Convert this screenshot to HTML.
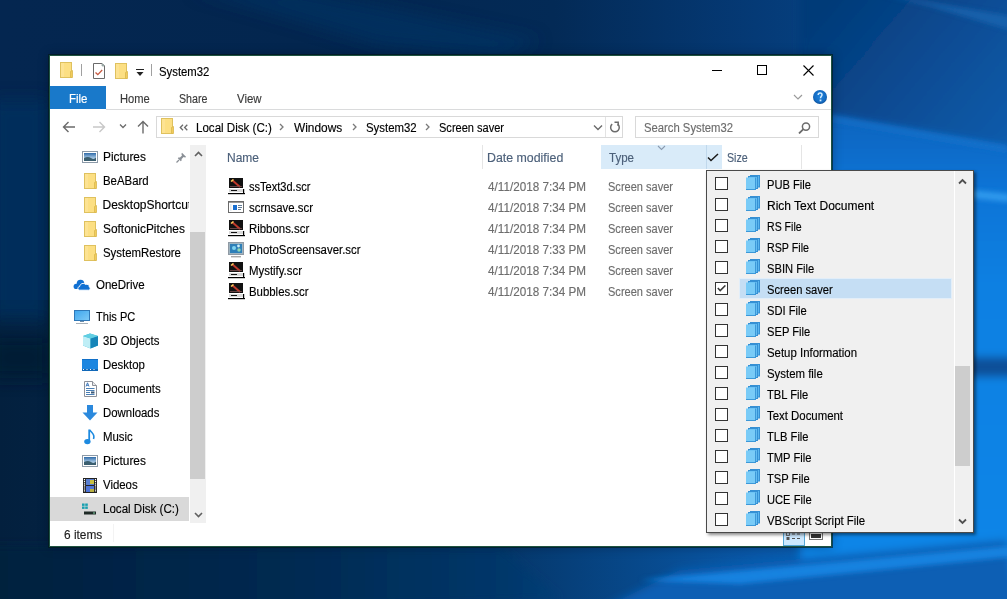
<!DOCTYPE html><html><head><meta charset="utf-8"><style>
html,body{margin:0;padding:0;width:1007px;height:599px;overflow:hidden;}
body{position:relative;background:#032a55;font-family:"Liberation Sans",sans-serif;}
.t{position:absolute;white-space:nowrap;line-height:14px;font-family:"Liberation Sans",sans-serif;-webkit-text-stroke:0.15px currentColor;}
.ic{position:absolute;display:block;}
.abs{position:absolute;}
</style></head><body>
<svg class="abs" style="left:0;top:0" width="1007" height="599" viewBox="0 0 1007 599">
<defs>
<linearGradient id="gtop" x1="0" y1="0" x2="1007" y2="0" gradientUnits="userSpaceOnUse">
<stop offset="0" stop-color="#042650"/><stop offset="0.3" stop-color="#03264f"/><stop offset="0.55" stop-color="#032a56"/><stop offset="0.75" stop-color="#053a76"/><stop offset="0.88" stop-color="#064688"/><stop offset="1" stop-color="#0a529c"/></linearGradient>
<linearGradient id="gbot" x1="0" y1="0" x2="1007" y2="0" gradientUnits="userSpaceOnUse">
<stop offset="0" stop-color="#03203e"/><stop offset="0.3" stop-color="#042a52"/><stop offset="0.5" stop-color="#05376a"/><stop offset="0.75" stop-color="#0958a8"/><stop offset="1" stop-color="#0a72d2"/></linearGradient>
<linearGradient id="gupr" x1="831" y1="0" x2="1007" y2="150" gradientUnits="userSpaceOnUse">
<stop offset="0" stop-color="#053a78"/><stop offset="0.5" stop-color="#084c94"/><stop offset="1" stop-color="#0a5cac"/></linearGradient>
<linearGradient id="gright" x1="0" y1="115" x2="0" y2="599" gradientUnits="userSpaceOnUse">
<stop offset="0" stop-color="#0a64be"/><stop offset="0.15" stop-color="#0a74d6"/><stop offset="0.35" stop-color="#0a80e2"/><stop offset="1" stop-color="#0a86e8"/></linearGradient>
<filter id="bl" x="-50%" y="-50%" width="200%" height="200%"><feGaussianBlur stdDeviation="4"/></filter>
<filter id="bl3" x="-50%" y="-50%" width="200%" height="200%"><feGaussianBlur stdDeviation="2.5"/></filter>
<filter id="bl2" x="-50%" y="-50%" width="200%" height="200%"><feGaussianBlur stdDeviation="8"/></filter>
</defs>
<rect width="1007" height="599" fill="#04223f"/>
<rect x="0" y="0" width="1007" height="300" fill="url(#gtop)"/>
<rect x="0" y="300" width="1007" height="299" fill="url(#gbot)"/>
<g filter="url(#bl)">
<polygon points="800,-20 1030,-20 1030,150 800,110" fill="url(#gupr)"/>
<polygon points="800,110 1030,150 1030,620 800,620" fill="url(#gright)"/>
<rect x="960" y="357" width="60" height="20" fill="#0a4f98"/>
<polygon points="600,610 680,570 1007,540 1020,620 600,620" fill="#0a5fb4"/>
<polygon points="-20,546 500,546 560,599 -20,620" fill="url(#gbot)"/>
</g>
<g filter="url(#bl3)">
<polygon points="880,-6 1010,16 1010,30 930,6" fill="#1a66b0" opacity="0.8"/>
<polygon points="831,116 1007,146 1007,152 831,121" fill="#1a78d0" opacity="0.7"/>
<polygon points="950,188 1010,194 1010,202 950,196" fill="#3aa2f2" opacity="0.8"/>
<polygon points="640,580 1007,546 1020,556 740,584" fill="#1886e4" opacity="0.9"/>
</g>
<g filter="url(#bl2)">
<rect x="-10" y="100" width="59" height="220" fill="#08315e" opacity="0.8"/>
<rect x="-10" y="338" width="59" height="40" fill="#021a34"/>
<polygon points="190,-10 300,-10 540,40 500,58 380,45" fill="#0a3668" opacity="0.55"/>
</g>
</svg>
<div class="abs" style="left:49px;top:55px;width:781px;height:490px;border:1px solid #1f5442;background:#fff;box-shadow:0 0 0 1px rgba(2,25,20,0.6),0 0 10px rgba(0,10,30,0.35)"></div>
<svg class="ic" style="left:60px;top:62px" width="13" height="16" viewBox="0 0 13 16"><rect x="0.5" y="0.5" width="11" height="15" fill="#fcdf83" stroke="#dfc15e"/><rect x="1" y="1" width="3" height="14" fill="#fde393"/><path d="M10.5 9.5 L12.5 8.5 L12.5 15.5 L10.5 15.5Z" fill="#f2cc5b" stroke="#d9b84f" stroke-width="0.8"/></svg><div class="abs" style="left:81px;top:64px;width:1px;height:12px;background:#a0a0a0"></div><svg class="ic" style="left:92px;top:62px" width="14" height="18" viewBox="0 0 14 18"><path d="M1.5 1.5 H10 L12.5 4 V16.5 H1.5Z" fill="#fff" stroke="#6a6a6a"/><path d="M10 1.5 V4 H12.5Z" fill="#b8c8c4" stroke="#7a8a86" stroke-width="0.6"/><path d="M3.5 10.5 L5.8 12.6 L10.2 8" fill="none" stroke="#c65a42" stroke-width="1.3"/></svg><svg class="ic" style="left:115px;top:63px" width="13" height="16" viewBox="0 0 13 16"><rect x="0.5" y="0.5" width="11" height="15" fill="#fcdf83" stroke="#dfc15e"/><rect x="1" y="1" width="3" height="14" fill="#fde393"/><path d="M10.5 9.5 L12.5 8.5 L12.5 15.5 L10.5 15.5Z" fill="#f2cc5b" stroke="#d9b84f" stroke-width="0.8"/></svg><div class="abs" style="left:136px;top:69px;width:8px;height:1px;background:#222"></div><svg class="ic" style="left:136px;top:72px" width="8" height="5" viewBox="0 0 8 5"><path d="M0.5 0 H7.5 L4 4Z" fill="#222"/></svg><div class="abs" style="left:151px;top:64px;width:1px;height:12px;background:#a0a0a0"></div><div class="t" style="left:159px;top:64.5px;color:#000;font-size:12px;transform:scaleX(0.944);transform-origin:0 0;">System32</div>
<div class="abs" style="left:712px;top:70px;width:10px;height:1px;background:#000"></div><div class="abs" style="left:757px;top:65px;width:8px;height:8px;border:1px solid #000"></div><svg class="ic" style="left:803px;top:65px" width="11" height="11" viewBox="0 0 11 11"><path d="M0.5 0.5 L10.5 10.5 M10.5 0.5 L0.5 10.5" stroke="#000" stroke-width="1.1"/></svg><div class="abs" style="left:50px;top:86px;width:56px;height:23px;background:#1979ca"></div><div class="t" style="left:69px;top:92px;color:#fff;font-size:12px;transform:scaleX(0.956);transform-origin:0 0;">File</div>
<div class="t" style="left:120px;top:92px;color:#3b3b3b;font-size:12px;transform:scaleX(0.93);transform-origin:0 0;">Home</div>
<div class="t" style="left:179px;top:92px;color:#3b3b3b;font-size:12px;transform:scaleX(0.89);transform-origin:0 0;">Share</div>
<div class="t" style="left:237px;top:92px;color:#3b3b3b;font-size:12px;transform:scaleX(0.95);transform-origin:0 0;">View</div>
<svg class="ic" style="left:793px;top:94px" width="10" height="7" viewBox="0 0 10 7"><path d="M1 1 L5 5 L9 1" fill="none" stroke="#9a9a9a" stroke-width="1.2"/></svg><svg class="ic" style="left:813px;top:90px" width="14" height="14" viewBox="0 0 14 14"><defs><radialGradient id="hg" cx="0.5" cy="0.45" r="0.55"><stop offset="0" stop-color="#2285dc"/><stop offset="0.75" stop-color="#146cc4"/><stop offset="1" stop-color="#0b4f98"/></radialGradient></defs><circle cx="7" cy="7" r="7" fill="url(#hg)"/><path d="M5.2 5.1 C5.2 3.6 6.1 3 7.1 3 C8.2 3 9 3.7 9 4.8 C9 6.1 7.5 6.3 7.5 8.2" fill="none" stroke="#d2ecff" stroke-width="1.5"/><rect x="6.6" y="9.5" width="1.8" height="1.8" fill="#d2ecff"/></svg><div class="abs" style="left:106px;top:109px;width:725px;height:1px;background:#dadbdc"></div><svg class="ic" style="left:62px;top:121px" width="14" height="12" viewBox="0 0 14 12"><path d="M13 6 H1.5 M6.5 1 L1.5 6 L6.5 11" fill="none" stroke="#6b6b6b" stroke-width="1.4"/></svg><svg class="ic" style="left:92px;top:121px" width="14" height="12" viewBox="0 0 14 12"><path d="M1 6 H12.5 M7.5 1 L12.5 6 L7.5 11" fill="none" stroke="#c8c8c8" stroke-width="1.4"/></svg><svg class="ic" style="left:119px;top:123px" width="8" height="6" viewBox="0 0 8 6"><path d="M1 1.5 L4 4.5 L7 1.5" fill="none" stroke="#6b6b6b" stroke-width="1.3"/></svg><svg class="ic" style="left:137px;top:120px" width="12" height="14" viewBox="0 0 12 14"><path d="M6 13.5 V1.5 M1 6.5 L6 1.5 L11 6.5" fill="none" stroke="#6b6b6b" stroke-width="1.4"/></svg><div class="abs" style="left:156px;top:116px;width:465px;height:20px;border:1px solid #d9d9d9;background:#fff"></div><svg class="ic" style="left:161px;top:118px" width="13" height="16" viewBox="0 0 13 16"><rect x="0.5" y="0.5" width="11" height="15" fill="#fcdf83" stroke="#dfc15e"/><rect x="1" y="1" width="3" height="14" fill="#fde393"/><path d="M10.5 9.5 L12.5 8.5 L12.5 15.5 L10.5 15.5Z" fill="#f2cc5b" stroke="#d9b84f" stroke-width="0.8"/></svg><svg class="ic" style="left:179px;top:124px" width="10" height="7" viewBox="0 0 10 7"><path d="M4 0.8 L1.3 3.5 L4 6.2 M8.3 0.8 L5.6 3.5 L8.3 6.2" fill="none" stroke="#6b6b6b" stroke-width="1.3"/></svg><div class="t" style="left:196px;top:121px;color:#000;font-size:12px;transform:scaleX(0.964);transform-origin:0 0;">Local Disk (C:)</div>
<svg class="ic" style="left:279px;top:123px" width="6" height="8" viewBox="0 0 6 8"><path d="M1 1 L4 4 L1 7" fill="none" stroke="#7a7a7a" stroke-width="1.3"/></svg><div class="t" style="left:294px;top:121px;color:#000;font-size:12px;transform:scaleX(0.99);transform-origin:0 0;">Windows</div>
<svg class="ic" style="left:352px;top:123px" width="6" height="8" viewBox="0 0 6 8"><path d="M1 1 L4 4 L1 7" fill="none" stroke="#7a7a7a" stroke-width="1.3"/></svg><div class="t" style="left:366px;top:121px;color:#000;font-size:12px;transform:scaleX(0.95);transform-origin:0 0;">System32</div>
<svg class="ic" style="left:425px;top:123px" width="6" height="8" viewBox="0 0 6 8"><path d="M1 1 L4 4 L1 7" fill="none" stroke="#7a7a7a" stroke-width="1.3"/></svg><div class="t" style="left:439px;top:121px;color:#000;font-size:12px;transform:scaleX(0.92);transform-origin:0 0;">Screen saver</div>
<svg class="ic" style="left:593px;top:124px" width="10" height="8" viewBox="0 0 10 8"><path d="M1 1.5 L5 5.5 L9 1.5" fill="none" stroke="#6b6b6b" stroke-width="1.4"/></svg><div class="abs" style="left:605px;top:117px;width:1px;height:20px;background:#e3e3e3"></div><svg class="ic" style="left:609px;top:121px" width="12" height="13" viewBox="0 0 12 13"><path d="M8.7 3.2 A4.3 4.3 0 1 1 3.2 3.2" fill="none" stroke="#6b6b6b" stroke-width="1.5"/><path d="M5.5 1.2 H9.2 V5" fill="none" stroke="#6b6b6b" stroke-width="1.5"/></svg><div class="abs" style="left:635px;top:116px;width:182px;height:20px;border:1px solid #d9d9d9;background:#fff"></div><div class="t" style="left:644px;top:121px;color:#6d6d6d;font-size:12px;transform:scaleX(0.94);transform-origin:0 0;">Search System32</div>
<svg class="ic" style="left:798px;top:122px" width="13" height="12" viewBox="0 0 13 12"><circle cx="8" cy="4.6" r="3.6" fill="none" stroke="#6b6b6b" stroke-width="1.5"/><path d="M5.4 7.2 L1 11.5" stroke="#6b6b6b" stroke-width="1.8"/></svg><div class="abs" style="left:50px;top:497px;width:139px;height:24px;background:#d9d9d9"></div><svg class="ic" style="left:82px;top:151px" width="16" height="12" viewBox="0 0 16 12"><defs><linearGradient id="pg0" x1="0" y1="0" x2="0" y2="1"><stop offset="0" stop-color="#2e6aa8"/><stop offset="0.5" stop-color="#8fb6d9"/><stop offset="1" stop-color="#cfe3f0"/></linearGradient></defs><rect x="0.5" y="0.5" width="15" height="11" fill="#fff" stroke="#8c9aa8"/><rect x="2" y="2" width="12" height="8" fill="url(#pg0)"/><path d="M2 7 Q6 5 9 7 T14 6.5 V10 H2Z" fill="#3b5f70"/></svg><svg class="ic" style="left:84px;top:173px" width="13" height="16" viewBox="0 0 13 16"><rect x="0.5" y="0.5" width="11" height="15" fill="#fcdf83" stroke="#dfc15e"/><rect x="1" y="1" width="3" height="14" fill="#fde393"/><path d="M10.5 9.5 L12.5 8.5 L12.5 15.5 L10.5 15.5Z" fill="#f2cc5b" stroke="#d9b84f" stroke-width="0.8"/></svg><svg class="ic" style="left:84px;top:197px" width="13" height="16" viewBox="0 0 13 16"><rect x="0.5" y="0.5" width="11" height="15" fill="#fcdf83" stroke="#dfc15e"/><rect x="1" y="1" width="3" height="14" fill="#fde393"/><path d="M10.5 9.5 L12.5 8.5 L12.5 15.5 L10.5 15.5Z" fill="#f2cc5b" stroke="#d9b84f" stroke-width="0.8"/></svg><svg class="ic" style="left:84px;top:221px" width="13" height="16" viewBox="0 0 13 16"><rect x="0.5" y="0.5" width="11" height="15" fill="#fcdf83" stroke="#dfc15e"/><rect x="1" y="1" width="3" height="14" fill="#fde393"/><path d="M10.5 9.5 L12.5 8.5 L12.5 15.5 L10.5 15.5Z" fill="#f2cc5b" stroke="#d9b84f" stroke-width="0.8"/></svg><svg class="ic" style="left:84px;top:245px" width="13" height="16" viewBox="0 0 13 16"><rect x="0.5" y="0.5" width="11" height="15" fill="#fcdf83" stroke="#dfc15e"/><rect x="1" y="1" width="3" height="14" fill="#fde393"/><path d="M10.5 9.5 L12.5 8.5 L12.5 15.5 L10.5 15.5Z" fill="#f2cc5b" stroke="#d9b84f" stroke-width="0.8"/></svg><svg class="ic" style="left:73px;top:279px" width="18" height="12" viewBox="0 0 18 12"><g fill="#1170d2"><circle cx="7.5" cy="4.6" r="3.8"/><circle cx="3.2" cy="7.4" r="2.6"/><rect x="3" y="6" width="6" height="4"/></g><path d="M6.6 11.2 C4.4 11.2 4.2 7.8 6.6 7.6 C7 4.6 10.6 3.4 12.6 5.4 C14.3 4.6 16.6 5.8 16.3 8 C17.6 8.4 17.6 11.2 15.8 11.2Z" fill="#1170d2" stroke="#fff" stroke-width="1"/></svg><svg class="ic" style="left:73px;top:310px" width="18" height="15" viewBox="0 0 18 15"><defs><linearGradient id="pcg" x1="0" y1="0" x2="1" y2="1"><stop offset="0" stop-color="#3ea6ee"/><stop offset="1" stop-color="#7fcaf7"/></linearGradient></defs><rect x="1.5" y="0.5" width="15" height="10" fill="url(#pcg)" stroke="#2f78b8"/><rect x="7" y="11" width="4" height="1" fill="#6c8ca8"/><rect x="3" y="13" width="12" height="1" fill="#a9b2ba"/></svg><svg class="ic" style="left:82px;top:333px" width="17" height="16" viewBox="0 0 17 16"><path d="M1 3 L8 0.5 L16 3 L16 12.5 L8.5 15.5 L1 12.5Z" fill="#35b8d4"/><path d="M1 3 L8.5 5.5 L8.5 15.5 L1 12.5Z" fill="#bfeef6"/><path d="M8.5 5.5 L16 3 L16 12.5 L8.5 15.5Z" fill="#1685b8"/><path d="M1 3 L8 0.5 L16 3 L8.5 5.5Z" fill="#62cfe3"/></svg><svg class="ic" style="left:82px;top:359px" width="16" height="12" viewBox="0 0 16 12"><rect x="0" y="0" width="16" height="12" fill="#1e87e0"/><rect x="0" y="0" width="16" height="1" fill="#1170c8"/><rect x="0" y="10" width="16" height="2" fill="#1168b8"/><path d="M1 10.5 H15" stroke="#fff" stroke-width="1" stroke-dasharray="1 2.5"/></svg><svg class="ic" style="left:84px;top:381px" width="13" height="16" viewBox="0 0 13 16"><path d="M0.5 0.5 H8.5 L12.5 4.5 V15.5 H0.5Z" fill="#fff" stroke="#8c9099"/><path d="M8.5 0.5 V4.5 H12.5" fill="#e8e8e8" stroke="#8c9099"/><path d="M2 5.5 L3.5 1.8 L5 5.5 M2.5 4.3 H4.5" fill="none" stroke="#2f6db5" stroke-width="0.9"/><path d="M2 7.5 H10.5 M2 9.5 H10.5 M2 11.5 H6 M2 13.5 H10.5" fill="none" stroke="#4a7fb5" stroke-width="1"/><rect x="7" y="10.5" width="3.5" height="2" fill="#3c5a78"/></svg><svg class="ic" style="left:82px;top:405px" width="16" height="16" viewBox="0 0 16 16"><path d="M5 0 H11 V7.5 H15.5 L8 15.5 L0.5 7.5 H5Z" fill="#2b89dd"/></svg><svg class="ic" style="left:84px;top:429px" width="12" height="16" viewBox="0 0 12 16"><path d="M5.2 0.5 V11.5" stroke="#1d8ae0" stroke-width="1.8"/><ellipse cx="3.4" cy="12.6" rx="3.2" ry="2.6" fill="#1d8ae0"/><path d="M5.6 0.8 C7 3.5 11.5 5 9.5 10" fill="none" stroke="#1d8ae0" stroke-width="1.6"/></svg><svg class="ic" style="left:82px;top:455px" width="16" height="12" viewBox="0 0 16 12"><defs><linearGradient id="pg12" x1="0" y1="0" x2="0" y2="1"><stop offset="0" stop-color="#2e6aa8"/><stop offset="0.5" stop-color="#8fb6d9"/><stop offset="1" stop-color="#cfe3f0"/></linearGradient></defs><rect x="0.5" y="0.5" width="15" height="11" fill="#fff" stroke="#8c9aa8"/><rect x="2" y="2" width="12" height="8" fill="url(#pg12)"/><path d="M2 7 Q6 5 9 7 T14 6.5 V10 H2Z" fill="#3b5f70"/></svg><svg class="ic" style="left:83px;top:478px" width="14" height="15" viewBox="0 0 14 15"><rect x="0" y="0" width="14" height="15" fill="#222"/><rect x="3" y="1" width="8" height="6" fill="#5a7fd0"/><rect x="7" y="2" width="4" height="4" fill="#c8c040"/><rect x="3" y="8" width="8" height="6" fill="#4f74d6"/><rect x="7" y="11" width="4" height="3" fill="#b8b040"/><path d="M1.5 1 V14 M12.5 1 V14" stroke="#fff" stroke-width="1.2" stroke-dasharray="1.2 0.9"/></svg><svg class="ic" style="left:81px;top:503px" width="16" height="13" viewBox="0 0 16 13"><rect x="1" y="0.5" width="2.6" height="2.4" fill="#1aa0b0"/><rect x="4.2" y="0.5" width="2.6" height="2.4" fill="#1aa0b0"/><rect x="1" y="3.5" width="2.6" height="2.4" fill="#1aa0b0"/><rect x="4.2" y="3.5" width="2.6" height="2.4" fill="#1aa0b0"/><rect x="3" y="8.5" width="12" height="3" fill="#1f2a26"/><rect x="12" y="9.5" width="2" height="1" fill="#7fcf9f"/></svg><div class="abs" style="left:50px;top:144px;width:139px;height:378px;overflow:hidden"><div class="t" style="left:52.5px;top:6px;color:#000;font-size:12px;transform:scaleX(0.99);transform-origin:0 0;">Pictures</div>
<div class="t" style="left:52.5px;top:30px;color:#000;font-size:12px;transform:scaleX(0.95);transform-origin:0 0;">BeABard</div>
<div class="t" style="left:52.5px;top:54px;color:#000;font-size:12px;">DesktopShortcuts</div>
<div class="t" style="left:52.5px;top:78px;color:#000;font-size:12px;transform:scaleX(0.99);transform-origin:0 0;">SoftonicPitches</div>
<div class="t" style="left:52.5px;top:102px;color:#000;font-size:12px;transform:scaleX(0.95);transform-origin:0 0;">SystemRestore</div>
<div class="t" style="left:46px;top:134px;color:#000;font-size:12px;transform:scaleX(0.96);transform-origin:0 0;">OneDrive</div>
<div class="t" style="left:46px;top:166px;color:#000;font-size:12px;transform:scaleX(0.92);transform-origin:0 0;">This PC</div>
<div class="t" style="left:52.5px;top:190px;color:#000;font-size:12px;transform:scaleX(0.95);transform-origin:0 0;">3D Objects</div>
<div class="t" style="left:52.5px;top:214px;color:#000;font-size:12px;transform:scaleX(0.95);transform-origin:0 0;">Desktop</div>
<div class="t" style="left:52.5px;top:238px;color:#000;font-size:12px;transform:scaleX(0.95);transform-origin:0 0;">Documents</div>
<div class="t" style="left:52.5px;top:262px;color:#000;font-size:12px;transform:scaleX(0.95);transform-origin:0 0;">Downloads</div>
<div class="t" style="left:52.5px;top:286px;color:#000;font-size:12px;transform:scaleX(0.95);transform-origin:0 0;">Music</div>
<div class="t" style="left:52.5px;top:310px;color:#000;font-size:12px;transform:scaleX(0.99);transform-origin:0 0;">Pictures</div>
<div class="t" style="left:52.5px;top:334px;color:#000;font-size:12px;transform:scaleX(0.95);transform-origin:0 0;">Videos</div>
<div class="t" style="left:52.5px;top:358px;color:#000;font-size:12px;transform:scaleX(0.964);transform-origin:0 0;">Local Disk (C:)</div>
</div><svg class="ic" style="left:176px;top:152px" width="11" height="11" viewBox="0 0 11 11"><path d="M6 0.8 L10.2 5 L9 5.6 L7.6 5 L5.6 7 L5.6 8.6 L4.8 9.2 L1.8 6.2 L2.4 5.4 L4 5.4 L6 3.4 L5.4 2 Z" fill="#8a8f96"/><path d="M3 8 L0.5 10.5" stroke="#8a8f96" stroke-width="1.3"/></svg><div class="abs" style="left:190px;top:145px;width:16px;height:378px;background:#f0f0f0"></div><div class="abs" style="left:190px;top:232px;width:15px;height:247px;background:#cdcdcd"></div><svg class="ic" style="left:194px;top:151px" width="9" height="6" viewBox="0 0 9 6"><path d="M1 5 L4.5 1.5 L8 5" fill="none" stroke="#606060" stroke-width="1.6"/></svg><svg class="ic" style="left:194px;top:512px" width="9" height="6" viewBox="0 0 9 6"><path d="M1 1 L4.5 4.5 L8 1" fill="none" stroke="#606060" stroke-width="1.6"/></svg><div class="t" style="left:227px;top:151px;color:#4c607a;font-size:12px;">Name</div>
<div class="abs" style="left:482px;top:145px;width:1px;height:24px;background:#e5e5e5"></div><div class="t" style="left:487px;top:151px;color:#4c607a;font-size:12px;transform:scaleX(1.03);transform-origin:0 0;">Date modified</div>
<div class="abs" style="left:601px;top:145px;width:121px;height:24px;background:#d9ebf9"></div><div class="abs" style="left:706px;top:145px;width:1px;height:24px;background:#c0d8ec"></div><div class="t" style="left:609px;top:151px;color:#4c607a;font-size:12px;transform:scaleX(0.96);transform-origin:0 0;">Type</div>
<svg class="ic" style="left:657px;top:145px" width="9" height="6" viewBox="0 0 9 6"><path d="M1 1 L4.5 4.5 L8 1" fill="none" stroke="#8a9bb0" stroke-width="1.1"/></svg><svg class="ic" style="left:707px;top:153px" width="12" height="9" viewBox="0 0 12 9"><path d="M1 4.5 L4 7.5 L11 1" fill="none" stroke="#1a1a1a" stroke-width="1.5"/></svg><div class="t" style="left:727px;top:151px;color:#4c607a;font-size:12px;transform:scaleX(0.89);transform-origin:0 0;">Size</div>
<div class="abs" style="left:801px;top:145px;width:1px;height:24px;background:#e5e5e5"></div><svg class="ic" style="left:228px;top:178px" width="17" height="17" viewBox="0 0 17 17"><rect x="1" y="0" width="14" height="10" fill="#111"/><path d="M4 2 L12 9" stroke="#c0392b" stroke-width="2"/><path d="M3 3.5 L5.5 1.5" stroke="#f6d060" stroke-width="1.6"/><rect x="2" y="8" width="12" height="0.8" fill="#7a5050"/><rect x="1" y="11" width="15" height="3" fill="#d9d9d9"/><rect x="0" y="15" width="17" height="1.2" fill="#000"/><rect x="15" y="11" width="1.2" height="5" fill="#000"/><rect x="3" y="12" width="6" height="1" fill="#111"/></svg><div class="t" style="left:249px;top:180px;color:#000;font-size:12px;transform:scaleX(0.92);transform-origin:0 0;">ssText3d.scr</div>
<div class="t" style="left:488px;top:180px;color:#6d6d6d;font-size:12px;transform:scaleX(0.975);transform-origin:0 0;">4/11/2018 7:34 PM</div>
<div class="t" style="left:608px;top:180px;color:#6d6d6d;font-size:12px;transform:scaleX(0.92);transform-origin:0 0;">Screen saver</div>
<svg class="ic" style="left:228px;top:200px" width="17" height="17" viewBox="0 0 17 17"><rect x="0.5" y="1.5" width="15" height="11" fill="#fff" stroke="#6a6a6a"/><rect x="1" y="2" width="14" height="1" fill="#9a9a9a"/><rect x="2" y="4" width="1.5" height="7" fill="#e4ecf2"/><rect x="5" y="5" width="4" height="5" fill="#1a6fd0"/><path d="M10 5.5 H14 M10 7.5 H14 M10 9.5 H13" fill="none" stroke="#3a5a7a" stroke-width="0.8"/></svg><div class="t" style="left:249px;top:201px;color:#000;font-size:12px;transform:scaleX(0.95);transform-origin:0 0;">scrnsave.scr</div>
<div class="t" style="left:488px;top:201px;color:#6d6d6d;font-size:12px;transform:scaleX(0.975);transform-origin:0 0;">4/11/2018 7:34 PM</div>
<div class="t" style="left:608px;top:201px;color:#6d6d6d;font-size:12px;transform:scaleX(0.92);transform-origin:0 0;">Screen saver</div>
<svg class="ic" style="left:228px;top:220px" width="17" height="17" viewBox="0 0 17 17"><rect x="1" y="0" width="14" height="10" fill="#111"/><path d="M4 2 L12 9" stroke="#c0392b" stroke-width="2"/><path d="M3 3.5 L5.5 1.5" stroke="#f6d060" stroke-width="1.6"/><rect x="2" y="8" width="12" height="0.8" fill="#7a5050"/><rect x="1" y="11" width="15" height="3" fill="#d9d9d9"/><rect x="0" y="15" width="17" height="1.2" fill="#000"/><rect x="15" y="11" width="1.2" height="5" fill="#000"/><rect x="3" y="12" width="6" height="1" fill="#111"/></svg><div class="t" style="left:249px;top:222px;color:#000;font-size:12px;transform:scaleX(0.95);transform-origin:0 0;">Ribbons.scr</div>
<div class="t" style="left:488px;top:222px;color:#6d6d6d;font-size:12px;transform:scaleX(0.975);transform-origin:0 0;">4/11/2018 7:34 PM</div>
<div class="t" style="left:608px;top:222px;color:#6d6d6d;font-size:12px;transform:scaleX(0.92);transform-origin:0 0;">Screen saver</div>
<svg class="ic" style="left:228px;top:242px" width="17" height="17" viewBox="0 0 17 17"><rect x="0.5" y="0.5" width="15" height="12" fill="#a0b4c0" stroke="#909aa4"/><rect x="2" y="2" width="12" height="9" fill="#2e7fb8"/><circle cx="6" cy="6" r="2" fill="#7fd4f0"/><circle cx="10.5" cy="4" r="1.4" fill="#cfeff8"/><circle cx="11" cy="8" r="1.7" fill="#8fd8b0"/><rect x="3" y="14" width="10" height="1.4" fill="#a8a8a8"/></svg><div class="t" style="left:249px;top:243px;color:#000;font-size:12px;transform:scaleX(0.95);transform-origin:0 0;">PhotoScreensaver.scr</div>
<div class="t" style="left:488px;top:243px;color:#6d6d6d;font-size:12px;transform:scaleX(0.975);transform-origin:0 0;">4/11/2018 7:33 PM</div>
<div class="t" style="left:608px;top:243px;color:#6d6d6d;font-size:12px;transform:scaleX(0.92);transform-origin:0 0;">Screen saver</div>
<svg class="ic" style="left:228px;top:262px" width="17" height="17" viewBox="0 0 17 17"><rect x="1" y="0" width="14" height="10" fill="#111"/><path d="M4 2 L12 9" stroke="#c0392b" stroke-width="2"/><path d="M3 3.5 L5.5 1.5" stroke="#f6d060" stroke-width="1.6"/><rect x="2" y="8" width="12" height="0.8" fill="#7a5050"/><rect x="1" y="11" width="15" height="3" fill="#d9d9d9"/><rect x="0" y="15" width="17" height="1.2" fill="#000"/><rect x="15" y="11" width="1.2" height="5" fill="#000"/><rect x="3" y="12" width="6" height="1" fill="#111"/></svg><div class="t" style="left:249px;top:264px;color:#000;font-size:12px;transform:scaleX(0.95);transform-origin:0 0;">Mystify.scr</div>
<div class="t" style="left:488px;top:264px;color:#6d6d6d;font-size:12px;transform:scaleX(0.975);transform-origin:0 0;">4/11/2018 7:34 PM</div>
<div class="t" style="left:608px;top:264px;color:#6d6d6d;font-size:12px;transform:scaleX(0.92);transform-origin:0 0;">Screen saver</div>
<svg class="ic" style="left:228px;top:283px" width="17" height="17" viewBox="0 0 17 17"><rect x="1" y="0" width="14" height="10" fill="#111"/><path d="M4 2 L12 9" stroke="#c0392b" stroke-width="2"/><path d="M3 3.5 L5.5 1.5" stroke="#f6d060" stroke-width="1.6"/><rect x="2" y="8" width="12" height="0.8" fill="#7a5050"/><rect x="1" y="11" width="15" height="3" fill="#d9d9d9"/><rect x="0" y="15" width="17" height="1.2" fill="#000"/><rect x="15" y="11" width="1.2" height="5" fill="#000"/><rect x="3" y="12" width="6" height="1" fill="#111"/></svg><div class="t" style="left:249px;top:285px;color:#000;font-size:12px;transform:scaleX(0.95);transform-origin:0 0;">Bubbles.scr</div>
<div class="t" style="left:488px;top:285px;color:#6d6d6d;font-size:12px;transform:scaleX(0.975);transform-origin:0 0;">4/11/2018 7:34 PM</div>
<div class="t" style="left:608px;top:285px;color:#6d6d6d;font-size:12px;transform:scaleX(0.92);transform-origin:0 0;">Screen saver</div>
<div class="t" style="left:64px;top:528px;color:#1e1e1e;font-size:12px;transform:scaleX(0.99);transform-origin:0 0;">6 items</div>
<div class="abs" style="left:113px;top:524px;width:1px;height:18px;background:#f3f3f3"></div><div class="abs" style="left:783px;top:522px;width:20px;height:22px;border:1px solid #56a8d8;background:#cce8ff"></div><svg class="ic" style="left:786px;top:532px" width="16" height="9" viewBox="0 0 16 9"><rect x="0.5" y="0.5" width="3" height="3" fill="none" stroke="#555" stroke-width="0.8"/><rect x="0.5" y="5" width="3" height="3" fill="#555"/><path d="M6 2 H9 M11 2 H14 M6 6.5 H9 M11 6.5 H14" stroke="#555" stroke-width="1"/></svg><svg class="ic" style="left:809px;top:532px" width="14" height="8" viewBox="0 0 14 8"><rect x="0.5" y="0.5" width="13" height="7" fill="#fff" stroke="#777"/><rect x="2" y="2" width="10" height="4" fill="#333"/></svg><div class="abs" style="left:706px;top:170px;width:266px;height:361px;border:1px solid #4a4a4a;background:#f0f0f0;box-shadow:2px 2px 3px rgba(0,0,0,0.45)"></div><div class="abs" style="left:954px;top:171px;width:1px;height:360px;background:#ffffff"></div><div class="abs" style="left:955px;top:366px;width:15px;height:100px;background:#cdcdcd"></div><svg class="ic" style="left:958px;top:178px" width="9" height="7" viewBox="0 0 9 7"><path d="M1 5.5 L4.5 2 L8 5.5" fill="none" stroke="#505050" stroke-width="1.8"/></svg><svg class="ic" style="left:958px;top:518px" width="9" height="7" viewBox="0 0 9 7"><path d="M1 1.5 L4.5 5 L8 1.5" fill="none" stroke="#505050" stroke-width="1.8"/></svg><div class="abs" style="left:715px;top:177px;width:11px;height:11px;border:1px solid #333;background:#fff"></div><svg class="ic" style="left:745px;top:175px" width="16" height="16" viewBox="0 0 16 16"><rect x="5.5" y="0.5" width="9" height="11.5" fill="#5ab6ee" stroke="#3590d4" stroke-width="1"/><rect x="3.5" y="1.5" width="9" height="12" fill="#62bdf2" stroke="#3590d4" stroke-width="1"/><rect x="1" y="2.5" width="10" height="12.5" fill="#79cbf7"/><rect x="1" y="14" width="10" height="1" fill="#3c98d8"/><rect x="10" y="2.5" width="1" height="12.5" fill="#3c98d8"/></svg><div class="t" style="left:767px;top:177.5px;color:#000;font-size:12px;transform:scaleX(0.93);transform-origin:0 0;">PUB File</div>
<div class="abs" style="left:715px;top:198px;width:11px;height:11px;border:1px solid #333;background:#fff"></div><svg class="ic" style="left:745px;top:196px" width="16" height="16" viewBox="0 0 16 16"><rect x="5.5" y="0.5" width="9" height="11.5" fill="#5ab6ee" stroke="#3590d4" stroke-width="1"/><rect x="3.5" y="1.5" width="9" height="12" fill="#62bdf2" stroke="#3590d4" stroke-width="1"/><rect x="1" y="2.5" width="10" height="12.5" fill="#79cbf7"/><rect x="1" y="14" width="10" height="1" fill="#3c98d8"/><rect x="10" y="2.5" width="1" height="12.5" fill="#3c98d8"/></svg><div class="t" style="left:767px;top:198.5px;color:#000;font-size:12px;">Rich Text Document</div>
<div class="abs" style="left:715px;top:219px;width:11px;height:11px;border:1px solid #333;background:#fff"></div><svg class="ic" style="left:745px;top:217px" width="16" height="16" viewBox="0 0 16 16"><rect x="5.5" y="0.5" width="9" height="11.5" fill="#5ab6ee" stroke="#3590d4" stroke-width="1"/><rect x="3.5" y="1.5" width="9" height="12" fill="#62bdf2" stroke="#3590d4" stroke-width="1"/><rect x="1" y="2.5" width="10" height="12.5" fill="#79cbf7"/><rect x="1" y="14" width="10" height="1" fill="#3c98d8"/><rect x="10" y="2.5" width="1" height="12.5" fill="#3c98d8"/></svg><div class="t" style="left:767px;top:219.5px;color:#000;font-size:12px;transform:scaleX(0.88);transform-origin:0 0;">RS File</div>
<div class="abs" style="left:715px;top:240px;width:11px;height:11px;border:1px solid #333;background:#fff"></div><svg class="ic" style="left:745px;top:238px" width="16" height="16" viewBox="0 0 16 16"><rect x="5.5" y="0.5" width="9" height="11.5" fill="#5ab6ee" stroke="#3590d4" stroke-width="1"/><rect x="3.5" y="1.5" width="9" height="12" fill="#62bdf2" stroke="#3590d4" stroke-width="1"/><rect x="1" y="2.5" width="10" height="12.5" fill="#79cbf7"/><rect x="1" y="14" width="10" height="1" fill="#3c98d8"/><rect x="10" y="2.5" width="1" height="12.5" fill="#3c98d8"/></svg><div class="t" style="left:767px;top:240.5px;color:#000;font-size:12px;transform:scaleX(0.89);transform-origin:0 0;">RSP File</div>
<div class="abs" style="left:715px;top:261px;width:11px;height:11px;border:1px solid #333;background:#fff"></div><svg class="ic" style="left:745px;top:259px" width="16" height="16" viewBox="0 0 16 16"><rect x="5.5" y="0.5" width="9" height="11.5" fill="#5ab6ee" stroke="#3590d4" stroke-width="1"/><rect x="3.5" y="1.5" width="9" height="12" fill="#62bdf2" stroke="#3590d4" stroke-width="1"/><rect x="1" y="2.5" width="10" height="12.5" fill="#79cbf7"/><rect x="1" y="14" width="10" height="1" fill="#3c98d8"/><rect x="10" y="2.5" width="1" height="12.5" fill="#3c98d8"/></svg><div class="t" style="left:767px;top:261.5px;color:#000;font-size:12px;transform:scaleX(0.93);transform-origin:0 0;">SBIN File</div>
<div class="abs" style="left:739px;top:278px;width:211px;height:19px;border:1px solid #e2eef9;background:#c5def4"></div><div class="abs" style="left:715px;top:282px;width:11px;height:11px;border:1px solid #333;background:#fff"></div><svg class="ic" style="left:717px;top:285px" width="9" height="7" viewBox="0 0 9 7"><path d="M0.8 3 L3.2 5.6 L8.4 0.4" fill="none" stroke="#3a3a3a" stroke-width="1.5"/></svg><svg class="ic" style="left:745px;top:280px" width="16" height="16" viewBox="0 0 16 16"><rect x="5.5" y="0.5" width="9" height="11.5" fill="#5ab6ee" stroke="#3590d4" stroke-width="1"/><rect x="3.5" y="1.5" width="9" height="12" fill="#62bdf2" stroke="#3590d4" stroke-width="1"/><rect x="1" y="2.5" width="10" height="12.5" fill="#79cbf7"/><rect x="1" y="14" width="10" height="1" fill="#3c98d8"/><rect x="10" y="2.5" width="1" height="12.5" fill="#3c98d8"/></svg><div class="t" style="left:767px;top:282.5px;color:#000;font-size:12px;transform:scaleX(0.93);transform-origin:0 0;">Screen saver</div>
<div class="abs" style="left:715px;top:303px;width:11px;height:11px;border:1px solid #333;background:#fff"></div><svg class="ic" style="left:745px;top:301px" width="16" height="16" viewBox="0 0 16 16"><rect x="5.5" y="0.5" width="9" height="11.5" fill="#5ab6ee" stroke="#3590d4" stroke-width="1"/><rect x="3.5" y="1.5" width="9" height="12" fill="#62bdf2" stroke="#3590d4" stroke-width="1"/><rect x="1" y="2.5" width="10" height="12.5" fill="#79cbf7"/><rect x="1" y="14" width="10" height="1" fill="#3c98d8"/><rect x="10" y="2.5" width="1" height="12.5" fill="#3c98d8"/></svg><div class="t" style="left:767px;top:303.5px;color:#000;font-size:12px;transform:scaleX(0.93);transform-origin:0 0;">SDI File</div>
<div class="abs" style="left:715px;top:324px;width:11px;height:11px;border:1px solid #333;background:#fff"></div><svg class="ic" style="left:745px;top:322px" width="16" height="16" viewBox="0 0 16 16"><rect x="5.5" y="0.5" width="9" height="11.5" fill="#5ab6ee" stroke="#3590d4" stroke-width="1"/><rect x="3.5" y="1.5" width="9" height="12" fill="#62bdf2" stroke="#3590d4" stroke-width="1"/><rect x="1" y="2.5" width="10" height="12.5" fill="#79cbf7"/><rect x="1" y="14" width="10" height="1" fill="#3c98d8"/><rect x="10" y="2.5" width="1" height="12.5" fill="#3c98d8"/></svg><div class="t" style="left:767px;top:324.5px;color:#000;font-size:12px;transform:scaleX(0.93);transform-origin:0 0;">SEP File</div>
<div class="abs" style="left:715px;top:345px;width:11px;height:11px;border:1px solid #333;background:#fff"></div><svg class="ic" style="left:745px;top:343px" width="16" height="16" viewBox="0 0 16 16"><rect x="5.5" y="0.5" width="9" height="11.5" fill="#5ab6ee" stroke="#3590d4" stroke-width="1"/><rect x="3.5" y="1.5" width="9" height="12" fill="#62bdf2" stroke="#3590d4" stroke-width="1"/><rect x="1" y="2.5" width="10" height="12.5" fill="#79cbf7"/><rect x="1" y="14" width="10" height="1" fill="#3c98d8"/><rect x="10" y="2.5" width="1" height="12.5" fill="#3c98d8"/></svg><div class="t" style="left:767px;top:345.5px;color:#000;font-size:12px;transform:scaleX(0.95);transform-origin:0 0;">Setup Information</div>
<div class="abs" style="left:715px;top:366px;width:11px;height:11px;border:1px solid #333;background:#fff"></div><svg class="ic" style="left:745px;top:364px" width="16" height="16" viewBox="0 0 16 16"><rect x="5.5" y="0.5" width="9" height="11.5" fill="#5ab6ee" stroke="#3590d4" stroke-width="1"/><rect x="3.5" y="1.5" width="9" height="12" fill="#62bdf2" stroke="#3590d4" stroke-width="1"/><rect x="1" y="2.5" width="10" height="12.5" fill="#79cbf7"/><rect x="1" y="14" width="10" height="1" fill="#3c98d8"/><rect x="10" y="2.5" width="1" height="12.5" fill="#3c98d8"/></svg><div class="t" style="left:767px;top:366.5px;color:#000;font-size:12px;transform:scaleX(0.95);transform-origin:0 0;">System file</div>
<div class="abs" style="left:715px;top:387px;width:11px;height:11px;border:1px solid #333;background:#fff"></div><svg class="ic" style="left:745px;top:385px" width="16" height="16" viewBox="0 0 16 16"><rect x="5.5" y="0.5" width="9" height="11.5" fill="#5ab6ee" stroke="#3590d4" stroke-width="1"/><rect x="3.5" y="1.5" width="9" height="12" fill="#62bdf2" stroke="#3590d4" stroke-width="1"/><rect x="1" y="2.5" width="10" height="12.5" fill="#79cbf7"/><rect x="1" y="14" width="10" height="1" fill="#3c98d8"/><rect x="10" y="2.5" width="1" height="12.5" fill="#3c98d8"/></svg><div class="t" style="left:767px;top:387.5px;color:#000;font-size:12px;transform:scaleX(0.93);transform-origin:0 0;">TBL File</div>
<div class="abs" style="left:715px;top:408px;width:11px;height:11px;border:1px solid #333;background:#fff"></div><svg class="ic" style="left:745px;top:406px" width="16" height="16" viewBox="0 0 16 16"><rect x="5.5" y="0.5" width="9" height="11.5" fill="#5ab6ee" stroke="#3590d4" stroke-width="1"/><rect x="3.5" y="1.5" width="9" height="12" fill="#62bdf2" stroke="#3590d4" stroke-width="1"/><rect x="1" y="2.5" width="10" height="12.5" fill="#79cbf7"/><rect x="1" y="14" width="10" height="1" fill="#3c98d8"/><rect x="10" y="2.5" width="1" height="12.5" fill="#3c98d8"/></svg><div class="t" style="left:767px;top:408.5px;color:#000;font-size:12px;transform:scaleX(0.95);transform-origin:0 0;">Text Document</div>
<div class="abs" style="left:715px;top:429px;width:11px;height:11px;border:1px solid #333;background:#fff"></div><svg class="ic" style="left:745px;top:427px" width="16" height="16" viewBox="0 0 16 16"><rect x="5.5" y="0.5" width="9" height="11.5" fill="#5ab6ee" stroke="#3590d4" stroke-width="1"/><rect x="3.5" y="1.5" width="9" height="12" fill="#62bdf2" stroke="#3590d4" stroke-width="1"/><rect x="1" y="2.5" width="10" height="12.5" fill="#79cbf7"/><rect x="1" y="14" width="10" height="1" fill="#3c98d8"/><rect x="10" y="2.5" width="1" height="12.5" fill="#3c98d8"/></svg><div class="t" style="left:767px;top:429.5px;color:#000;font-size:12px;transform:scaleX(0.93);transform-origin:0 0;">TLB File</div>
<div class="abs" style="left:715px;top:450px;width:11px;height:11px;border:1px solid #333;background:#fff"></div><svg class="ic" style="left:745px;top:448px" width="16" height="16" viewBox="0 0 16 16"><rect x="5.5" y="0.5" width="9" height="11.5" fill="#5ab6ee" stroke="#3590d4" stroke-width="1"/><rect x="3.5" y="1.5" width="9" height="12" fill="#62bdf2" stroke="#3590d4" stroke-width="1"/><rect x="1" y="2.5" width="10" height="12.5" fill="#79cbf7"/><rect x="1" y="14" width="10" height="1" fill="#3c98d8"/><rect x="10" y="2.5" width="1" height="12.5" fill="#3c98d8"/></svg><div class="t" style="left:767px;top:450.5px;color:#000;font-size:12px;transform:scaleX(0.93);transform-origin:0 0;">TMP File</div>
<div class="abs" style="left:715px;top:471px;width:11px;height:11px;border:1px solid #333;background:#fff"></div><svg class="ic" style="left:745px;top:469px" width="16" height="16" viewBox="0 0 16 16"><rect x="5.5" y="0.5" width="9" height="11.5" fill="#5ab6ee" stroke="#3590d4" stroke-width="1"/><rect x="3.5" y="1.5" width="9" height="12" fill="#62bdf2" stroke="#3590d4" stroke-width="1"/><rect x="1" y="2.5" width="10" height="12.5" fill="#79cbf7"/><rect x="1" y="14" width="10" height="1" fill="#3c98d8"/><rect x="10" y="2.5" width="1" height="12.5" fill="#3c98d8"/></svg><div class="t" style="left:767px;top:471.5px;color:#000;font-size:12px;transform:scaleX(0.93);transform-origin:0 0;">TSP File</div>
<div class="abs" style="left:715px;top:492px;width:11px;height:11px;border:1px solid #333;background:#fff"></div><svg class="ic" style="left:745px;top:490px" width="16" height="16" viewBox="0 0 16 16"><rect x="5.5" y="0.5" width="9" height="11.5" fill="#5ab6ee" stroke="#3590d4" stroke-width="1"/><rect x="3.5" y="1.5" width="9" height="12" fill="#62bdf2" stroke="#3590d4" stroke-width="1"/><rect x="1" y="2.5" width="10" height="12.5" fill="#79cbf7"/><rect x="1" y="14" width="10" height="1" fill="#3c98d8"/><rect x="10" y="2.5" width="1" height="12.5" fill="#3c98d8"/></svg><div class="t" style="left:767px;top:492.5px;color:#000;font-size:12px;transform:scaleX(0.93);transform-origin:0 0;">UCE File</div>
<div class="abs" style="left:715px;top:513px;width:11px;height:11px;border:1px solid #333;background:#fff"></div><svg class="ic" style="left:745px;top:511px" width="16" height="16" viewBox="0 0 16 16"><rect x="5.5" y="0.5" width="9" height="11.5" fill="#5ab6ee" stroke="#3590d4" stroke-width="1"/><rect x="3.5" y="1.5" width="9" height="12" fill="#62bdf2" stroke="#3590d4" stroke-width="1"/><rect x="1" y="2.5" width="10" height="12.5" fill="#79cbf7"/><rect x="1" y="14" width="10" height="1" fill="#3c98d8"/><rect x="10" y="2.5" width="1" height="12.5" fill="#3c98d8"/></svg><div class="t" style="left:767px;top:513.5px;color:#000;font-size:12px;transform:scaleX(0.95);transform-origin:0 0;">VBScript Script File</div>
</body></html>
